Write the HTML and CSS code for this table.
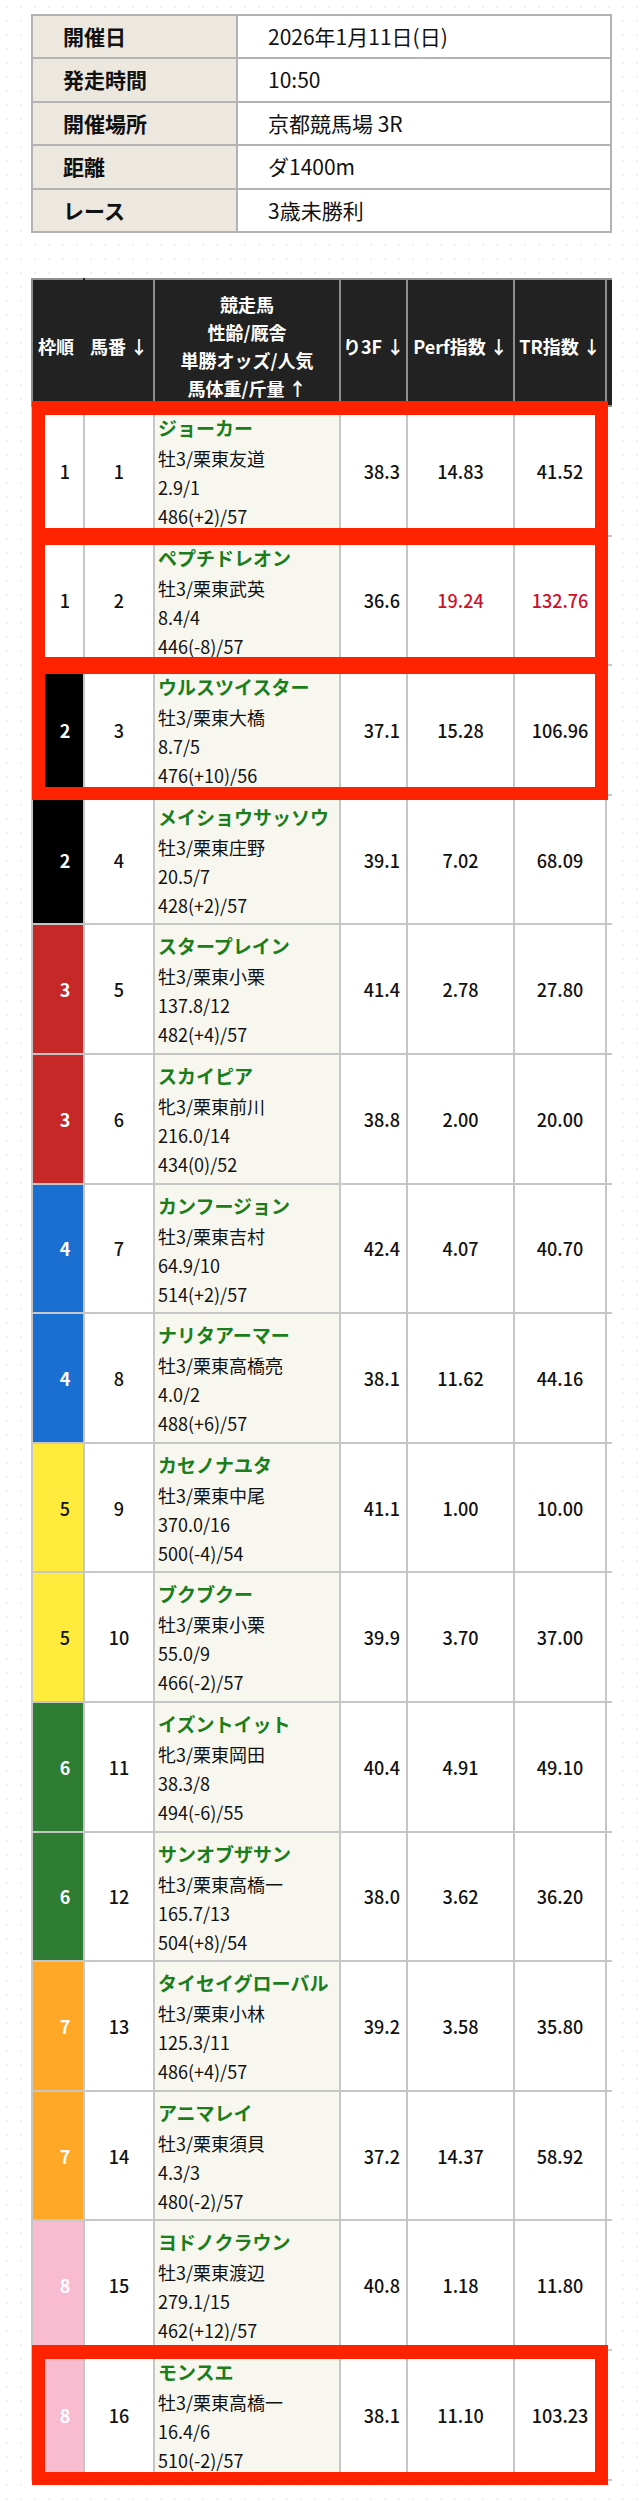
FILE: index.html
```html
<!DOCTYPE html>
<html lang="ja">
<head>
<meta charset="utf-8">
<title>京都競馬場 3R</title>
<link rel="stylesheet" href="styles.css">
</head>
<body>
<div class="page">
  <table class="info">
    <tr><th>開催日</th><td>2026年1月11日(日)</td></tr>
    <tr><th>発走時間</th><td>10:50</td></tr>
    <tr><th>開催場所</th><td>京都競馬場 3R</td></tr>
    <tr><th>距離</th><td>ダ1400m</td></tr>
    <tr><th>レース</th><td>3歳未勝利</td></tr>
  </table>

  <div class="entries-wrap">
    <table class="entries">
      <colgroup>
        <col class="w-waku"><col class="w-uma"><col class="w-name"><col class="w-agari"><col class="w-perf"><col class="w-tr"><col class="w-more">
      </colgroup>
      <thead>
        <tr>
          <th class="h-waku">枠順</th>
          <th class="h-uma">馬番 ↓</th>
          <th class="h-name">競走馬<br>性齢/厩舎<br>単勝オッズ/人気<br>馬体重/斤量 ↑</th>
          <th class="h-agari">り3F ↓</th>
          <th>Perf指数 ↓</th>
          <th>TR指数 ↓</th>
          <th class="more"></th>
        </tr>
      </thead>
      <tbody>
        <tr>
          <td class="waku w1 hl"><span class="frame"></span>1</td><td class="uma">1</td>
          <td class="name"><span class="hn">ジョーカー</span><span class="ln">牡3/栗東友道</span><span class="ln">2.9/1</span><span class="ln">486(+2)/57</span></td>
          <td class="agari">38.3</td><td>14.83</td><td>41.52</td><td class="more"></td>
        </tr>
        <tr>
          <td class="waku w1 hl"><span class="frame"></span>1</td><td class="uma">2</td>
          <td class="name"><span class="hn">ペプチドレオン</span><span class="ln">牡3/栗東武英</span><span class="ln">8.4/4</span><span class="ln">446(-8)/57</span></td>
          <td class="agari">36.6</td><td class="red">19.24</td><td class="red">132.76</td><td class="more"></td>
        </tr>
        <tr>
          <td class="waku w2 hl"><span class="frame"></span>2</td><td class="uma">3</td>
          <td class="name"><span class="hn">ウルスツイスター</span><span class="ln">牡3/栗東大橋</span><span class="ln">8.7/5</span><span class="ln">476(+10)/56</span></td>
          <td class="agari">37.1</td><td>15.28</td><td>106.96</td><td class="more"></td>
        </tr>
        <tr>
          <td class="waku w2">2</td><td class="uma">4</td>
          <td class="name"><span class="hn">メイショウサッソウ</span><span class="ln">牡3/栗東庄野</span><span class="ln">20.5/7</span><span class="ln">428(+2)/57</span></td>
          <td class="agari">39.1</td><td>7.02</td><td>68.09</td><td class="more"></td>
        </tr>
        <tr>
          <td class="waku w3">3</td><td class="uma">5</td>
          <td class="name"><span class="hn">スタープレイン</span><span class="ln">牡3/栗東小栗</span><span class="ln">137.8/12</span><span class="ln">482(+4)/57</span></td>
          <td class="agari">41.4</td><td>2.78</td><td>27.80</td><td class="more"></td>
        </tr>
        <tr>
          <td class="waku w3">3</td><td class="uma">6</td>
          <td class="name"><span class="hn">スカイピア</span><span class="ln">牝3/栗東前川</span><span class="ln">216.0/14</span><span class="ln">434(0)/52</span></td>
          <td class="agari">38.8</td><td>2.00</td><td>20.00</td><td class="more"></td>
        </tr>
        <tr>
          <td class="waku w4">4</td><td class="uma">7</td>
          <td class="name"><span class="hn">カンフージョン</span><span class="ln">牡3/栗東吉村</span><span class="ln">64.9/10</span><span class="ln">514(+2)/57</span></td>
          <td class="agari">42.4</td><td>4.07</td><td>40.70</td><td class="more"></td>
        </tr>
        <tr>
          <td class="waku w4">4</td><td class="uma">8</td>
          <td class="name"><span class="hn">ナリタアーマー</span><span class="ln">牡3/栗東高橋亮</span><span class="ln">4.0/2</span><span class="ln">488(+6)/57</span></td>
          <td class="agari">38.1</td><td>11.62</td><td>44.16</td><td class="more"></td>
        </tr>
        <tr>
          <td class="waku w5">5</td><td class="uma">9</td>
          <td class="name"><span class="hn">カセノナユタ</span><span class="ln">牡3/栗東中尾</span><span class="ln">370.0/16</span><span class="ln">500(-4)/54</span></td>
          <td class="agari">41.1</td><td>1.00</td><td>10.00</td><td class="more"></td>
        </tr>
        <tr>
          <td class="waku w5">5</td><td class="uma">10</td>
          <td class="name"><span class="hn">ブクブクー</span><span class="ln">牡3/栗東小栗</span><span class="ln">55.0/9</span><span class="ln">466(-2)/57</span></td>
          <td class="agari">39.9</td><td>3.70</td><td>37.00</td><td class="more"></td>
        </tr>
        <tr>
          <td class="waku w6">6</td><td class="uma">11</td>
          <td class="name"><span class="hn">イズントイット</span><span class="ln">牝3/栗東岡田</span><span class="ln">38.3/8</span><span class="ln">494(-6)/55</span></td>
          <td class="agari">40.4</td><td>4.91</td><td>49.10</td><td class="more"></td>
        </tr>
        <tr>
          <td class="waku w6">6</td><td class="uma">12</td>
          <td class="name"><span class="hn">サンオブザサン</span><span class="ln">牡3/栗東高橋一</span><span class="ln">165.7/13</span><span class="ln">504(+8)/54</span></td>
          <td class="agari">38.0</td><td>3.62</td><td>36.20</td><td class="more"></td>
        </tr>
        <tr>
          <td class="waku w7">7</td><td class="uma">13</td>
          <td class="name"><span class="hn">タイセイグローバル</span><span class="ln">牡3/栗東小林</span><span class="ln">125.3/11</span><span class="ln">486(+4)/57</span></td>
          <td class="agari">39.2</td><td>3.58</td><td>35.80</td><td class="more"></td>
        </tr>
        <tr>
          <td class="waku w7">7</td><td class="uma">14</td>
          <td class="name"><span class="hn">アニマレイ</span><span class="ln">牡3/栗東須貝</span><span class="ln">4.3/3</span><span class="ln">480(-2)/57</span></td>
          <td class="agari">37.2</td><td>14.37</td><td>58.92</td><td class="more"></td>
        </tr>
        <tr>
          <td class="waku w8">8</td><td class="uma">15</td>
          <td class="name"><span class="hn">ヨドノクラウン</span><span class="ln">牡3/栗東渡辺</span><span class="ln">279.1/15</span><span class="ln">462(+12)/57</span></td>
          <td class="agari">40.8</td><td>1.18</td><td>11.80</td><td class="more"></td>
        </tr>
        <tr>
          <td class="waku w8 hl"><span class="frame"></span>8</td><td class="uma">16</td>
          <td class="name"><span class="hn">モンスエ</span><span class="ln">牡3/栗東高橋一</span><span class="ln">16.4/6</span><span class="ln">510(-2)/57</span></td>
          <td class="agari">38.1</td><td>11.10</td><td>103.23</td><td class="more"></td>
        </tr>
      </tbody>
    </table>
  </div>
</div>
</body>
</html>
```

FILE: styles.css
```css
html, body {
  margin: 0;
  padding: 0;
}

body {
  font-family: "Noto Sans CJK JP", "Noto Sans", sans-serif;
  color: #111;
  background-color: #fff;
  background-image: radial-gradient(circle, #f0f0f0 1px, transparent 1.6px);
  background-size: 14px 14px;
}

.page {
  padding: 14px 28px 30px 31px;
}

/* ---------- race info ---------- */
.info {
  width: 581px;
  border-collapse: collapse;
  background: #fff;
  font-size: 21px;
}

.info th,
.info td {
  border: 2px solid #b3b3b3;
  padding: 6px 0 6px 30px;
  line-height: 29.4px;
  text-align: left;
  white-space: nowrap;
}

.info th {
  width: 173px;
  background: #ece8e0;
  font-weight: 700;
}

.info td {
  font-weight: 400;
}

/* ---------- entries ---------- */
.entries-wrap {
  margin-top: 45px;
}

.entries {
  border-collapse: collapse;
  table-layout: fixed;
  width: 580px;
  background: #fff;
}

.w-waku { width: 52px; }
.w-uma { width: 70px; }
.w-name { width: 186px; }
.w-agari { width: 67px; }
.w-perf { width: 107px; }
.w-tr { width: 92px; }
.w-more { width: 6px; }

.entries th {
  background: #222;
  color: #fff;
  font-size: 18px;
  font-weight: 700;
  line-height: 28px;
  padding: 10px 2px 3px;
  border: 2px solid #8e8e8e;
  text-align: center;
  vertical-align: middle;
  white-space: nowrap;
  overflow: hidden;
}

.entries th.h-waku {
  border-right-color: #222;
  padding-right: 6px;
}

.entries th.h-uma {
  border-left-color: #222;
}

.entries th.h-agari {
  text-align: right;
  padding-right: 7px;
}

.entries td {
  border: 2px solid #c6c6c6;
  font-size: 18px;
  font-weight: 500;
  text-align: center;
  vertical-align: middle;
  padding: 0;
  white-space: nowrap;
}

.entries .more {
  padding: 0;
  border-right: none;
}

.entries td.name {
  background: #f7f7ef;
  text-align: left;
  padding: 5px 2px 3.6px 3px;
  font-weight: 400;
}

.name .hn {
  display: block;
  color: #1b7d1b;
  font-weight: 700;
  font-size: 19px;
  line-height: 32px;
}

.name .ln {
  display: block;
  font-size: 18px;
  line-height: 29px;
}

.entries td.agari {
  text-align: right;
  padding-right: 6px;
}

.entries td.red {
  color: #cf0f2a;
}

/* waku colours */
.entries td.waku {
  padding-left: 14px;
}

.w1 { background: #fff; color: #111; }
.entries td.w2 { background: #000; color: #fff; font-weight: 700; }
.entries td.w3 { background: #c62828; color: #fff; font-weight: 700; }
.entries td.w4 { background: #1a6fd0; color: #fff; font-weight: 700; }
.entries td.w5 { background: #ffeb3b; color: #111; }
.entries td.w6 { background: #2e7d32; color: #fff; font-weight: 700; }
.entries td.w7 { background: #ffa726; color: #fff; font-weight: 700; }
.entries td.w8 { background: #f8bbd0; color: #fff; font-weight: 700; }

/* highlight frame drawn over a whole row */
.entries td.hl {
  position: relative;
}

.frame {
  position: absolute;
  left: -1px;
  top: -6px;
  bottom: -6px;
  width: 576px;
  box-sizing: border-box;
  border: 13px solid #ff2200;
  border-top-width: 14px;
  z-index: 3;
  pointer-events: none;
}
```
